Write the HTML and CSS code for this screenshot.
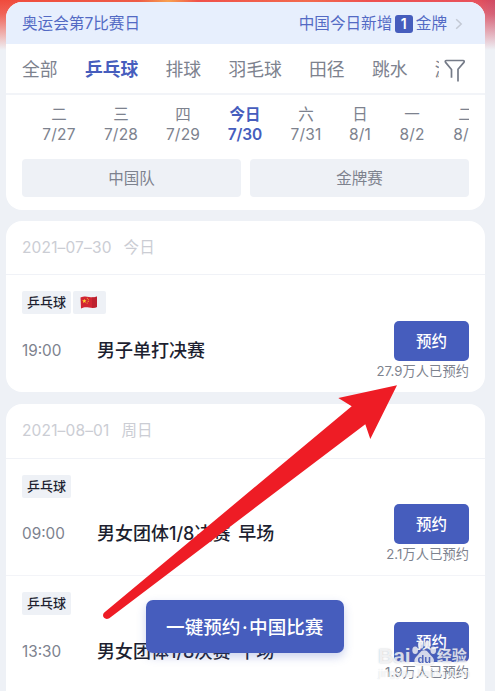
FILE: index.html
```html
<!DOCTYPE html>
<html lang="zh-CN">
<head>
<meta charset="utf-8">
<title>奥运会赛程</title>
<link rel="stylesheet" href="styles.css">
</head>
<body>
<main class="page">
  <section class="card filter">
    <header class="banner">
      <span>奥运会第7比赛日</span>
      <a class="medals">中国今日新增<b class="count">1</b>金牌<svg class="chevron" viewBox="0 0 8 12"><path d="M1.200 1.200 6.200 6 1.200 10.800"/></svg></a>
    </header>
    <nav class="tabs">
      <div class="tab-list"><span>全部</span><span class="on">乒乓球</span><span>排球</span><span>羽毛球</span><span>田径</span><span>跳水</span><span>游泳</span></div>
      <svg class="funnel" viewBox="0 0 22 24"><path d="M2.500 1.500H19c1.200 0 1.600 1 .9 1.900L14 10.300V22.500M2.500 1.500C1.300 1.500.9 2.500 1.600 3.400L7.500 10.500V18.800"/></svg>
    </nav>
    <div class="dates">
      <div><span>二</span><span>7/27</span></div>
      <div><span>三</span><span>7/28</span></div>
      <div><span>四</span><span>7/29</span></div>
      <div class="on"><span>今日</span><span>7/30</span></div>
      <div><span>六</span><span>7/31</span></div>
      <div><span>日</span><span>8/1</span></div>
      <div><span>一</span><span>8/2</span></div>
      <div><span>二</span><span>8/3</span></div>
    </div>
    <div class="chips"><span>中国队</span><span>金牌赛</span></div>
  </section>

  <section class="card day">
    <h2><span>2021–07–30</span><span>今日</span></h2>
    <article class="match">
      <div class="tags"><span>乒乓球</span><span class="flag"><svg viewBox="0 0 18 13"><path fill="#d12532" d="M.5 1.600C4 .1 6 .4 9 1s5 .5 8-.5V11c-3 1.200-5 1-8 .5s-5-.5-8 1z"/><path fill="#a91d2c" opacity=".5" d="M12 1.300c2 0 3.500-.3 5-.8V11c-2 .8-3.500.9-5 .8z"/><path fill="#ffd52e" d="m4.300 2.700.6 1.500 1.600.1-1.200 1 .4 1.600-1.400-.9-1.300.9.3-1.600-1.200-1 1.600-.1z"/><g fill="#ffd52e"><circle cx="7.300" cy="2.300" r=".5"/><circle cx="8.300" cy="3.700" r=".5"/><circle cx="8.200" cy="5.500" r=".5"/><circle cx="7.100" cy="6.900" r=".5"/></g></svg></span></div>
      <div class="line"><time>19:00</time><h3>男子单打决赛</h3><div class="book"><button>预约</button><small>27.9万人已预约</small></div></div>
    </article>
  </section>

  <section class="card day rest">
    <h2><span>2021–08–01</span><span>周日</span></h2>
    <article class="match">
      <div class="tags"><span>乒乓球</span></div>
      <div class="line"><time>09:00</time><h3>男女团体1/8决赛 早场</h3><div class="book"><button>预约</button><small>2.1万人已预约</small></div></div>
    </article>
    <article class="match">
      <div class="tags"><span>乒乓球</span></div>
      <div class="line"><time>13:30</time><h3>男女团体1/8决赛 午场</h3><div class="book"><button>预约</button><small>1.9万人已预约</small></div></div>
    </article>
  </section>

  <svg class="arrow" viewBox="0 0 300 240"><path fill="#ee1c25" d="M297 5.300 238.300 18l13.400 8.300L4.300 232.600c-3.400 3.200.6 8.400 5 5.600L265.300 44.300l5 14.700z"/></svg>
  <button class="book-all">一键预约<i>·</i>中国比赛</button>
  <div class="watermark">
    <div class="brand"><span>Bai</span><svg viewBox="0 0 28 28"><g><ellipse cx="4.500" cy="11" rx="3" ry="4"/><ellipse cx="10.500" cy="5" rx="3" ry="4.200"/><ellipse cx="18" cy="5" rx="3" ry="4.200"/><ellipse cx="24" cy="11" rx="3" ry="4"/><path d="M14.200 11c4 0 5 4 8 6.500 5 4.500 2 9.500-3 9-3-.6-7-.6-10 0-5 .5-8-4.500-3-9 3-2.500 4-6.500 8-6.500z"/></g><text x="14.200" y="24.500" text-anchor="middle">du</text></svg><span class="cn">经验</span></div>
    <div class="site">jingyan.baidu.com</div>
  </div>
</main>
</body>
</html>
```
FILE: styles.css
```css
* { box-sizing: border-box; }
body { margin: 0; height: 691px; overflow: hidden; background: #eef1f6; font-family: Inter, "Noto Sans CJK SC", sans-serif; color: #7d828e; }
.page {
  position: relative; height: 691px; overflow: hidden; padding: 2px 10px 0 6px;
  display: flex; flex-direction: column;
  background: linear-gradient(to bottom, rgba(238,241,246,0) 0, rgba(238,241,246,.15) 14px, #eef1f6 50px) no-repeat,
    linear-gradient(to right, #f04a3c 0, #ee5a45 28%, #f8a04e 34%, #f04f48 40%, #f2694c 62%, #ee4f4e 75%, #e8505a 96%, #cf4963 100%);
}
.card { background: #fff; border-radius: 16px; overflow: hidden; flex: none; }
.filter { height: 207.500px; margin-bottom: 11px; }
.banner { height: 42px; background: #e7effd; padding: 1px 22px 0 16px; display: flex; justify-content: space-between; align-items: center; color: #536ac4; font-size: 15.600px; line-height: 24px; }
.medals { display: flex; align-items: center; }
.count { width: 18px; height: 18px; margin: 0 3px 0 2.500px; border-radius: 3px; background: #465dbd; color: #fff; font-size: 14px; line-height: 18px; font-weight: 600; text-align: center; }
.chevron { width: 8px; height: 12px; margin-left: 8px; fill: none; stroke: #c3c9d4; stroke-width: 1.500; }
.tabs { height: 51px; border-bottom: 2px solid #f2f4f8; padding: 2px 19px 0 16px; display: flex; align-items: center; justify-content: space-between; }
.tab-list { width: 417px; overflow: hidden; display: flex; gap: 27.300px; font-size: 17.800px; line-height: 26px; white-space: nowrap; }
.tab-list span { flex: none; }
.on { color: #465dbd; font-weight: 700; }
.funnel { width: 22px; height: 24px; margin-top: 2px; fill: none; stroke: #757b88; stroke-width: 1.700; }
.dates { height: 64px; margin: 0 16px; padding: 10px 0 0 6px; display: grid; grid-template-columns: 62px 62px 62px 62px 60px 48px 56px 52px; overflow: hidden; text-align: center; }
.dates div { display: flex; flex-direction: column; font-size: 15.500px; line-height: 20px; }
.dates span + span { letter-spacing: .2px; }
.dates .on { font-weight: 600; }
.dates .on span + span { letter-spacing: -.1px; }
.chips { padding: 0 16px; display: flex; gap: 9px; }
.chips span { flex: 1; height: 37.500px; border-radius: 4px; background: #eef1f6; text-align: center; font-size: 15.500px; line-height: 39px; }
.day { margin-bottom: 13px; }
.day h2 { margin: 0; height: 54.500px; border-bottom: 1.500px solid #f0f2f7; padding: 0 16px; display: flex; gap: 12px; font-size: 15.500px; line-height: 54px; font-weight: 400; color: #cbcdd4; letter-spacing: .15px; }
.match { height: 116.500px; padding: 16px 16px 0; }
.match + .match { border-top: 1.500px solid #f3f4f8; }
.rest { height: 310px; margin-top: -.5px; }
.tags { display: flex; gap: 1.500px; height: 23px; }
.tags span { background: #eef1f6; color: #1d1f30; font-size: 13px; font-weight: 500; line-height: 23px; padding: 0 5px; border-radius: 2px; }
.tags .flag { width: 33.500px; display: flex; align-items: center; justify-content: center; }
.flag svg { width: 18px; height: 13px; }
.line { display: flex; margin-top: 6.500px; }
.line time { width: 75px; font-size: 15.300px; line-height: 60px; }
.line h3 { margin: 0; flex: 1; font-size: 18px; line-height: 60px; font-weight: 500; color: #1d1f30; word-spacing: 3px; }
.book { display: flex; flex-direction: column; align-items: flex-end; white-space: nowrap; }
button { font-family: inherit; border: 0; color: #fff; background: #465dbd; }
.book button { width: 75px; height: 40px; border-radius: 5px; font-size: 15.500px; font-weight: 500; padding: 0 0 2px; }
.book small { font-size: 13.200px; line-height: 20px; letter-spacing: .1px; }
.arrow { position: absolute; left: 100px; top: 380px; width: 300px; height: 240px; }
.book-all { position: absolute; left: 146px; top: 600px; width: 197.500px; height: 53px; padding: 0 0 2px; border-radius: 7px; font-size: 18.600px; font-weight: 500; box-shadow: 0 4px 10px rgba(70,93,189,.28); }
.book-all i { font-style: normal; margin: 0 1.500px; }
.watermark { position: absolute; left: 378px; top: 637px; color: rgba(255,255,255,.75); }
.brand { display: flex; align-items: flex-end; height: 31px; font: bold 21px/24px "Liberation Sans", "Noto Sans CJK SC", sans-serif; text-shadow: 0 0 1.500px rgba(120,125,140,.5); }
.brand svg { width: 26px; height: 26px; margin-bottom: 2px; fill: rgba(255,255,255,.75); filter: drop-shadow(0 0 1px rgba(120,125,140,.5)); }
.brand text { fill: #5268bd; font-size: 12px; text-shadow: none; }
.brand .cn { font-size: 15px; }
.site { font: 11px/11px "Liberation Sans", sans-serif; letter-spacing: .2px; text-shadow: 0 0 1px rgba(120,125,140,.3); }
```
